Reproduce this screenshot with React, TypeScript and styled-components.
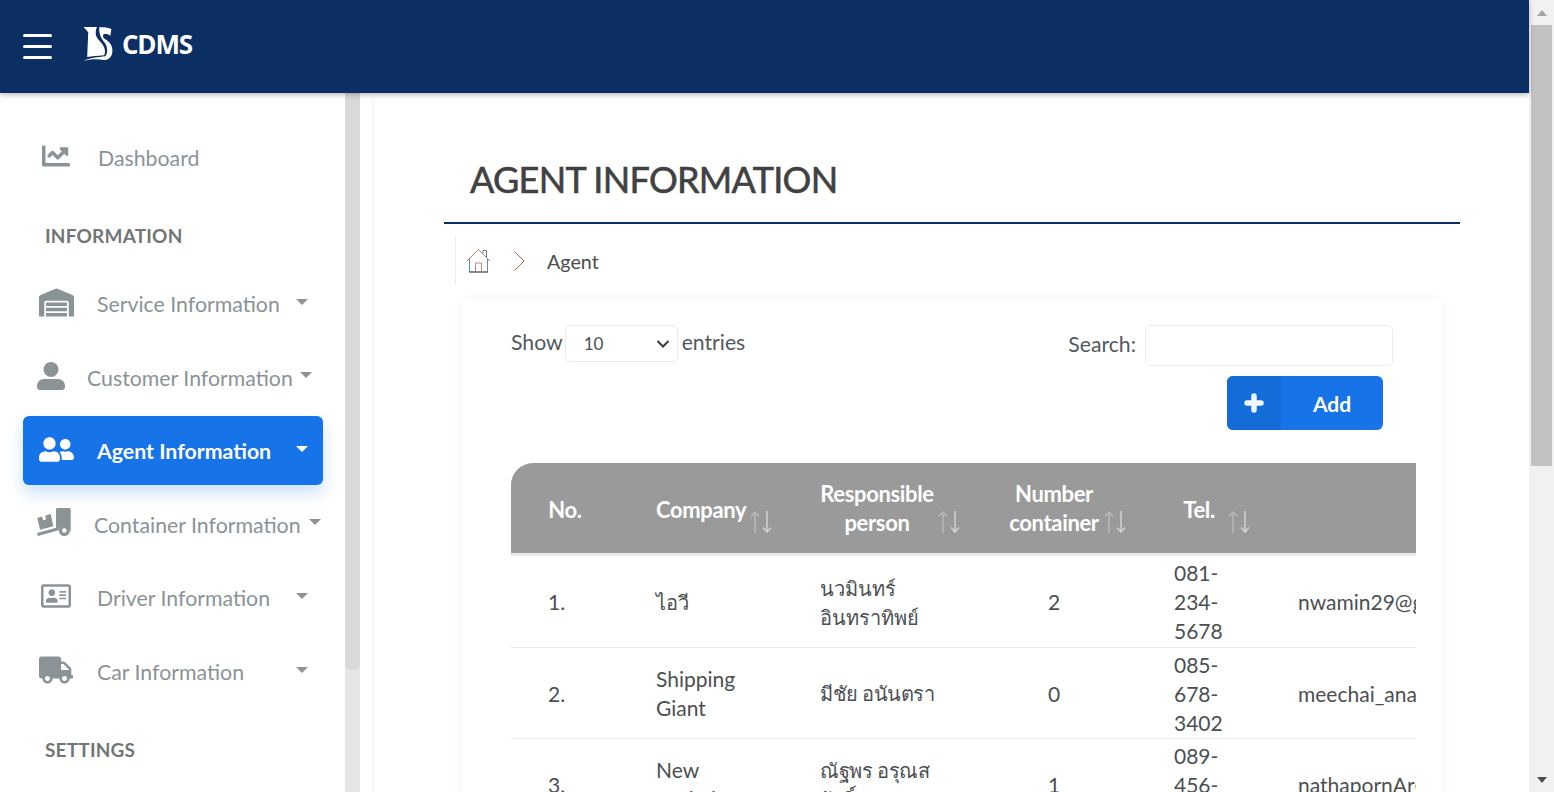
import React from "react";
import styled, { createGlobalStyle } from "styled-components";
import { FaChartLine, FaWarehouse, FaUserFriends, FaRegAddressCard, FaTruck } from "react-icons/fa";

const chevron = `data:image/svg+xml;utf8,<svg xmlns='http://www.w3.org/2000/svg' width='14' height='10'><path d='M1.500 2l5.500 5.500L12.500 2' fill='none' stroke='%23343a40' stroke-width='2'/></svg>`;

const Global = createGlobalStyle`
  html, body { margin: 0; padding: 0; background: #fff; height: 100%; overflow: hidden; }
  body { font-family: Lato, "Liberation Sans", sans-serif; }
  * { box-sizing: border-box; }
`;

const Shell = styled.div`
  display: flex;
  height: 100vh;
  overflow: hidden;
`;

const Page = styled.div`
  flex: 1;
  min-width: 0;
  display: flex;
  flex-direction: column;
`;

const PageScrollbar = styled.div`
  flex: 0 0 25px;
  display: flex;
  flex-direction: column;
  padding: 0 2px;
  background: #f1f1f1;
`;

const ScrollArrow = styled.div<{ $down?: boolean }>`
  flex: 0 0 25px;
  display: flex;
  align-items: center;
  justify-content: center;
  &::before {
    content: "";
    width: 0;
    height: 0;
    border-left: 5.5px solid transparent;
    border-right: 5.5px solid transparent;
    ${(p) => (p.$down ? "border-top: 6px solid #505050;" : "border-bottom: 6px solid #a3a3a3;")}
  }
`;

const ScrollThumb = styled.div`
  flex: 0 0 441px;
  background: #c1c1c1;
`;

const ScrollRest = styled.div`
  flex: 1;
`;

const Header = styled.header`
  position: relative;
  z-index: 5;
  flex: 0 0 93px;
  background: #0b2f62;
  display: flex;
  align-items: center;
  padding-left: 23px;
  box-shadow: 0 2px 5px rgba(0, 0, 0, 0.25);
`;

const Burger = styled.div`
  width: 29px;
  height: 24.500px;
  display: flex;
  flex-direction: column;
  justify-content: space-between;
  margin-right: 31px;
  span {
    display: block;
    height: 2.500px;
    border-radius: 2px;
    background: #fff;
  }
`;

const Logo = styled.div`
  display: flex;
  align-items: center;
  gap: 9px;
  margin-bottom: 6px;
`;

const LogoText = styled.span`
  font-family: "Open Sans", sans-serif;
  font-weight: 700;
  font-size: 26px;
  letter-spacing: -1.200px;
  color: #fff;
`;

const Layout = styled.div`
  flex: 1;
  min-height: 0;
  display: flex;
`;

const Sidebar = styled.nav`
  flex: 0 0 360px;
  display: flex;
  background: #fff;
`;

const SideInner = styled.div`
  flex: 0 0 345px;
  overflow: hidden;
  padding: 25px 22px 0 23px;
`;

const SideTrack = styled.div`
  flex: 0 0 15px;
  background: #e6e6e6;
`;

const SideThumb = styled.div`
  height: 577px;
  background: #d9d9d9;
  border-radius: 0 0 6px 6px;
`;

const SectionTitle = styled.div`
  margin: 30px 0 19px 22px;
  height: 28px;
  line-height: 28px;
  font-size: 19px;
  font-weight: 700;
  letter-spacing: 0.2px;
  color: #727676;
`;

const Item = styled.div<{ $active?: boolean; $pad: number }>`
  display: flex;
  align-items: center;
  height: 69px;
  margin-top: 4.600px;
  padding-left: ${(p) => p.$pad}px;
  padding-top: 2px;
  border-radius: 6px;
  font-size: 21.300px;
  color: ${(p) => (p.$active ? "#fff" : "#8b9397")};
  font-weight: ${(p) => (p.$active ? 700 : 400)};
  background: ${(p) => (p.$active ? "#1673e8" : "transparent")};
  box-shadow: ${(p) => (p.$active ? "0 8px 16px rgba(22,115,232,0.22)" : "none")};
`;

const IconSlot = styled.span<{ $w: number }>`
  flex: 0 0 ${(p) => p.$w}px;
  display: flex;
  align-items: center;
  margin-top: -4px;
  svg {
    display: block;
  }
`;

const Label = styled.span<{ $w: number }>`
  flex: 0 0 ${(p) => p.$w}px;
  white-space: nowrap;
`;

const Caret = styled.span`
  width: 0;
  height: 0;
  margin-top: -5px;
  border-left: 6px solid transparent;
  border-right: 6px solid transparent;
  border-top: 6px solid currentColor;
`;

const Main = styled.main`
  flex: 1;
  min-width: 0;
  overflow: hidden;
  margin-left: 15px;
  padding: 62px 69px 40px;
  background: #fff;
  box-shadow: -2px 0 6px rgba(0, 0, 0, 0.04);
`;

const Title = styled.h1`
  margin: 0;
  height: 67px;
  padding: 0 0 0 26px;
  border-bottom: 2px solid #0b2f62;
  font-size: 36px;
  line-height: 48px;
  font-weight: 400;
  letter-spacing: -0.720px;
  -webkit-text-stroke: 0.600px #3f4142;
  color: #3f4142;
  box-sizing: content-box;
`;

const Crumbs = styled.div`
  display: flex;
  align-items: center;
  height: 49px;
  margin: 12px 0 0 11px;
  padding-left: 10px;
  border-left: 1px solid #ececec;
  font-size: 19.700px;
  color: #4a4d50;
`;

const CrumbText = styled.span`
  margin-top: 2px;
`;

const CrumbIcon = styled.svg<{ $gap: number }>`
  display: block;
  margin-right: ${(p) => p.$gap}px;
`;

const Card = styled.section`
  margin: 14px 18px 0;
  padding: 26px 26px 30px 49px;
  border-radius: 10px;
  background: #fff;
  box-shadow: 0 0 14px rgba(0, 0, 0, 0.05);
`;

const Controls = styled.div`
  display: flex;
  justify-content: space-between;
  align-items: flex-start;
  padding-right: 23px;
  font-size: 21.200px;
  color: #52585d;
`;

const Field = styled.label`
  display: flex;
  align-items: center;
  gap: 4px;
  height: 37px;
`;

const SearchField = styled(Field)`
  height: 41px;
  gap: 9px;
`;

const FieldText = styled.span`
  margin-top: -4px;
`;

const Select = styled.select`
  appearance: none;
  width: 113px;
  height: 37px;
  margin-left: -2px;
  padding-left: 18px;
  border: 1px solid #e9ecef;
  border-radius: 5px;
  font: 400 17px Lato, sans-serif;
  color: #495057;
  background: #fff url("${chevron}") no-repeat right 7px center;
`;

const SearchInput = styled.input`
  width: 248px;
  height: 41px;
  border: 1px solid #e9ecef;
  border-radius: 5px;
  background: #fff;
`;

const AddRow = styled.div`
  display: flex;
  justify-content: flex-end;
  margin-top: 10px;
  padding-right: 33px;
`;

const AddButton = styled.button`
  display: flex;
  width: 156px;
  height: 54px;
  padding: 0;
  border: 0;
  border-radius: 6px;
  overflow: hidden;
  background: #1673e8;
  color: #fff;
  font: 700 21px Lato, sans-serif;
`;

const AddIcon = styled.span`
  flex: 0 0 54px;
  height: 100%;
  display: flex;
  align-items: center;
  justify-content: center;
  background: #146cd9;
`;

const AddLabel = styled.span`
  flex: 1;
  align-self: center;
`;

const TableWrap = styled.div`
  margin-top: 33px;
  overflow: hidden;
`;

const Table = styled.table`
  width: 1300px;
  table-layout: fixed;
  border-collapse: separate;
  border-spacing: 0;
  font-size: 21px;
  line-height: 29px;
  color: #4b4f52;
  tbody tr:first-child td {
    height: 92px;
  }
`;

const Th = styled.th`
  position: relative;
  height: 93px;
  padding: 3px 37px 3px;
  background: #9a9a9a;
  border-bottom: 3px solid #e9e9ef;
  color: #fff;
  font-weight: 700;
  font-size: 22px;
  letter-spacing: -0.350px;
  text-align: center;
  &:first-child {
    border-top-left-radius: 22px;
  }
`;

const ThSingle = styled.span`
  display: block;
  padding-top: 2px;
`;

const SortIcon = styled.svg`
  position: absolute;
  right: 11.500px;
  bottom: 19px;
  display: block;
`;

const Td = styled.td<{ $center?: boolean }>`
  height: 91px;
  padding: 1px 37px 1px;
  border-bottom: 1px solid #e9e9ef;
  text-align: ${(p) => (p.$center ? "center" : "left")};
  vertical-align: middle;
`;

const Nowrap = styled.span`
  white-space: nowrap;
`;

const ThaiText = styled.span<{ $track?: number; $lift?: boolean }>`
  display: block;
  white-space: pre;
  font-size: 20px;
  letter-spacing: ${(p) => p.$track ?? 0}px;
  padding-top: ${(p) => (p.$lift ? 2 : 0)}px;
`;

const Sort = () => (
  <SortIcon width="22" height="24" viewBox="0 0 22 24" fill="none">
    <path d="M5 23V2M1 6.500L5 2l4 4.500" stroke="#fff" strokeOpacity="0.3" strokeWidth="1.500" />
    <path d="M17 1v21M13 17.500l4 4.500 4-4.500" stroke="#fff" strokeOpacity="0.55" strokeWidth="1.500" />
  </SortIcon>
);

const UserIcon = () => (
  <svg width="28" height="28" viewBox="0 0 28 28" fill="currentColor">
    <circle cx="14" cy="7.500" r="7.500" />
    <path d="M7 17h14c4 0 7 3 7 7v1c0 1.700-1.300 3-3 3H3c-1.700 0-3-1.300-3-3v-1c0-4 3-7 7-7z" />
  </svg>
);

const DollyIcon = () => (
  <svg width="35" height="29" viewBox="0 0 35 29" fill="currentColor">
    <path d="M.3 10L5 8.600l1.200 3.600 3-.9L8 7.700 13.700 6l2.600 12.300L3 21.700z" />
    <path d="M19 1.500C19 .7 19.700 0 20.500 0h11.700c.8 0 1.500.7 1.500 1.500v21.800h-1.300a5.500 5.500 0 0 0-10.500-2.300l-2.900.8z" />
    <path d="M0 25l21-5.700.8 3L.8 28z" />
    <path fillRule="evenodd" d="M27.300 17a5.500 5.500 0 1 1 0 11 5.500 5.500 0 0 1 0-11zm0 3.200a2.300 2.300 0 1 0 0 4.600 2.300 2.300 0 0 0 0-4.600z" />
  </svg>
);

const PlusIcon = () => (
  <svg width="20" height="20" viewBox="0 0 20 20" fill="none" stroke="#f2f6fd" strokeWidth="5.500" strokeLinecap="round">
    <path d="M10 3v14M3 10h14" />
  </svg>
);

const rows = [
  { no: "1.", company: "ไอวี", person: "นวมินทร์\nอินทราทิพย์", track: 0, count: "2", tel: "081-234-5678", mail: "nwamin29@gmail.com" },
  { no: "2.", company: "Shipping Giant", person: "มีชัย อนันตรา", track: -0.5, count: "0", tel: "085-678-3402", mail: "meechai_ana@gmail.com" },
  { no: "3.", company: "New Logistics", person: "ณัฐพร อรุณส\nวัสดิ์", track: -0.4, count: "1", tel: "089-456-7890", mail: "nathapornAr@gmail.com" },
];

const menu = [
  { label: "Service Information", icon: <FaWarehouse size={35} />, pad: 16, slot: 58, w: 199 },
  { label: "Customer Information", icon: <UserIcon />, pad: 14, slot: 50, w: 213 },
  { label: "Agent Information", icon: <FaUserFriends size={35} />, pad: 16, slot: 58, w: 199, active: true },
  { label: "Container Information", icon: <DollyIcon />, pad: 14, slot: 57, w: 215 },
  { label: "Driver Information", icon: <FaRegAddressCard size={30} />, pad: 18, slot: 56, w: 199 },
  { label: "Car Information", icon: <FaTruck size={34} />, pad: 16, slot: 58, w: 199 },
];

export default function App() {
  return (
    <Shell>
      <Global />
      <Page>
        <Header>
          <Burger>
            <span />
            <span />
            <span />
          </Burger>
          <Logo>
            <svg width="30" height="34" viewBox="0 0 28 33" fill="#fff">
              <path d="M0 0H13C10.500 6 12 10 16 14C20 18 22 23 20 27.500C13 28 8 28.500 3.500 29L4.500 5Z" />
              <path d="M15 .5C19 0 23.500 .5 27 2L26 8.500C23.500 6.500 21 6 19.500 7C18 8.500 19 10.500 21 12C25 14 28 18 28 23C28 29 24 32 20 32C14 31 6 31 0 33C6 30 14 29.500 21 28.500C24 25 23.500 18 19.500 14C16.500 10.500 15 6 15 .5Z" />
            </svg>
            <LogoText>CDMS</LogoText>
          </Logo>
        </Header>
        <Layout>
          <Sidebar>
            <SideInner>
              <Item $pad={19}>
                <IconSlot $w={56}>
                  <FaChartLine size={28} />
                </IconSlot>
                <Label $w={199}>Dashboard</Label>
              </Item>
              <SectionTitle>INFORMATION</SectionTitle>
              {menu.map((m) => (
                <Item key={m.label} $pad={m.pad} $active={m.active}>
                  <IconSlot $w={m.slot}>{m.icon}</IconSlot>
                  <Label $w={m.w}>{m.label}</Label>
                  <Caret />
                </Item>
              ))}
              <SectionTitle>SETTINGS</SectionTitle>
            </SideInner>
            <SideTrack>
              <SideThumb />
            </SideTrack>
          </Sidebar>
          <Main>
            <Title>AGENT INFORMATION</Title>
            <Crumbs>
              <CrumbIcon $gap={22} width="25" height="25" viewBox="0 0 25 25" fill="none" stroke="#6d7a84" strokeWidth="1">
                <path d="M1 13L12.500 1.500 24 13" stroke="#b08a55" />
                <path d="M3.500 11v13h18V11" stroke="#5b8fc0" />
                <path d="M9.500 24v-9h6v9" stroke="#b98a80" />
                <path d="M17 5.500V2.500h3.500v6.500" />
                <path d="M3 24h19" stroke="#555" />
              </CrumbIcon>
              <CrumbIcon $gap={21} width="13" height="22" viewBox="0 0 13 22" fill="none">
                <path d="M1.500 1.500L11 11 1.500 20.500" stroke="#b5604f" strokeWidth="1" />
              </CrumbIcon>
              <CrumbText>Agent</CrumbText>
            </Crumbs>
            <Card>
              <Controls>
                <Field>
                  <FieldText>Show</FieldText>
                  <Select defaultValue="10">
                    <option>10</option>
                  </Select>
                  <FieldText>entries</FieldText>
                </Field>
                <SearchField>
                  <FieldText>Search:</FieldText>
                  <SearchInput />
                </SearchField>
              </Controls>
              <AddRow>
                <AddButton>
                  <AddIcon>
                    <PlusIcon />
                  </AddIcon>
                  <AddLabel>Add</AddLabel>
                </AddButton>
              </AddRow>
              <TableWrap>
                <Table>
                  <colgroup>
                    <col style={{ width: 108 }} />
                    <col style={{ width: 164 }} />
                    <col style={{ width: 188 }} />
                    <col style={{ width: 166 }} />
                    <col style={{ width: 124 }} />
                    <col style={{ width: 550 }} />
                  </colgroup>
                  <thead>
                    <tr>
                      <Th>
                        <ThSingle>No.</ThSingle>
                      </Th>
                      <Th>
                        <ThSingle>Company</ThSingle>
                        <Sort />
                      </Th>
                      <Th>
                        Responsible person
                        <Sort />
                      </Th>
                      <Th>
                        Number container
                        <Sort />
                      </Th>
                      <Th>
                        <ThSingle>Tel.</ThSingle>
                        <Sort />
                      </Th>
                      <Th />
                    </tr>
                  </thead>
                  <tbody>
                    {rows.map((r) => (
                      <tr key={r.no}>
                        <Td>{r.no}</Td>
                        <Td>{r.no === "1." ? <ThaiText $lift>{r.company}</ThaiText> : r.company}</Td>
                        <Td>
                          <ThaiText $track={r.track} $lift={r.person.includes("\n")}>
                            {r.person}
                          </ThaiText>
                        </Td>
                        <Td $center>{r.count}</Td>
                        <Td>{r.tel}</Td>
                        <Td>
                          <Nowrap>{r.mail}</Nowrap>
                        </Td>
                      </tr>
                    ))}
                  </tbody>
                </Table>
              </TableWrap>
            </Card>
          </Main>
        </Layout>
      </Page>
      <PageScrollbar>
        <ScrollArrow />
        <ScrollThumb />
        <ScrollRest />
        <ScrollArrow $down />
      </PageScrollbar>
    </Shell>
  );
}
